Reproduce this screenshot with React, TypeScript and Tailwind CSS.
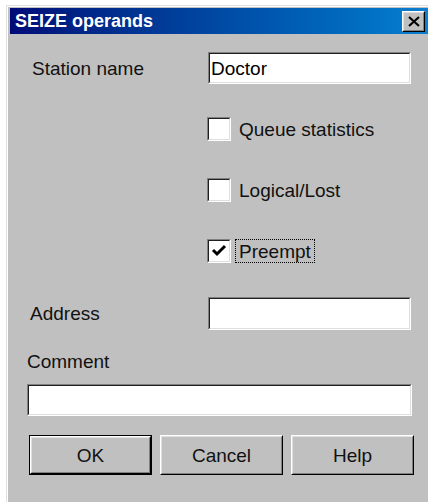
import type { ReactNode } from "react"

const font = "font-['Liberation_Sans',Arial,sans-serif]"

// Classic sunken 3D edit field
function Field({ value = "", className = "" }: { value?: string; className?: string }) {
  return (
    <div className={`border border-t-[#808080] border-l-[#808080] border-b-white border-r-white ${className}`}>
      <div className="h-full border border-t-[#202020] border-l-[#202020] border-b-[#dfdfdf] border-r-[#dfdfdf] bg-white flex items-center px-[1px]">
        <span className="text-[19px] leading-none text-black">{value}</span>
      </div>
    </div>
  )
}

function CheckBox({ checked, children, focused }: { checked?: boolean; children: ReactNode; focused?: boolean }) {
  return (
    <div className="flex items-center h-[24px]">
      <div className="w-[24px] h-[24px] border border-t-[#808080] border-l-[#808080] border-b-white border-r-white">
        <div className="w-full h-full border border-t-[#202020] border-l-[#202020] border-b-[#dfdfdf] border-r-[#dfdfdf] bg-white flex items-center justify-center">
          {checked && (
            <svg width="16" height="14" viewBox="0 0 16 14">
              <polyline points="2,6 6,10 14,2" fill="none" stroke="black" strokeWidth="3" />
            </svg>
          )}
        </div>
      </div>
      {focused ? (
        <span className="ml-[4px] border border-dotted border-black px-[3px] h-[24px] flex items-center text-[19px] leading-none">
          {children}
        </span>
      ) : (
        <span className="ml-[8px] text-[19px] leading-none">{children}</span>
      )}
    </div>
  )
}

function Button({ label, primary }: { label: string; primary?: boolean }) {
  const face = (
    <div className="h-full border border-t-white border-l-white border-b-black border-r-black">
      <div className="h-full border border-t-[#dfdfdf] border-l-[#dfdfdf] border-b-[#808080] border-r-[#808080] flex items-center justify-center text-[19px] leading-none">
        {label}
      </div>
    </div>
  )
  return primary ? (
    <div className="w-[123px] h-[40px] border border-black">{face}</div>
  ) : (
    <div className="w-[123px] h-[40px]">{face}</div>
  )
}

export default function App() {
  return (
    <div className={`min-h-[502px] bg-white overflow-hidden text-[#111] ${font}`}>
      <div className="ml-[6px] mt-[5px] w-[440px] border-l border-t border-[#dfdfdf]">
        <div className="border-l border-t border-white bg-[#c0c0c0] pt-[1px] pl-[2px] min-h-[497px]">
          {/* title bar */}
          <div className="h-[26px] flex items-center justify-between bg-gradient-to-r from-[#000a78] to-[#1284d4] pl-[5px] pr-[21px]">
            <span className="text-white font-bold text-[18px] leading-none">SEIZE operands</span>
            <div className="w-[23px] h-[21px] border border-t-white border-l-white border-b-black border-r-black bg-[#c0c0c0]">
              <div className="w-full h-full border border-b-[#808080] border-r-[#808080] border-t-[#dfdfdf] border-l-[#dfdfdf] flex items-center justify-center">
                <svg width="12" height="11" viewBox="0 0 12 11">
                  <path d="M1 1 L11 10 M11 1 L1 10" stroke="black" strokeWidth="2.2" />
                </svg>
              </div>
            </div>
          </div>

          {/* dialog body */}
          <div className="flex flex-col pt-[18px]">
            <div className="flex items-center h-[32px]">
              <span className="w-[198px] pl-[22px] text-[19px] leading-none">Station name</span>
              <Field value="Doctor" className="w-[203px] h-[32px]" />
            </div>

            <div className="flex flex-col gap-[37px] mt-[33px] pl-[197px]">
              <CheckBox>Queue statistics</CheckBox>
              <CheckBox>Logical/Lost</CheckBox>
              <CheckBox checked focused>
                Preempt
              </CheckBox>
            </div>

            <div className="flex items-center h-[33px] mt-[34px]">
              <span className="w-[198px] pl-[20px] text-[19px] leading-none">Address</span>
              <Field className="w-[203px] h-[33px]" />
            </div>

            <div className="mt-[20px] pl-[17px] h-[22px] flex items-center text-[19px] leading-none">Comment</div>
            <Field className="ml-[17px] mt-[12px] w-[385px] h-[32px]" />

            <div className="flex gap-[8px] ml-[19px] mt-[19px]">
              <Button label="OK" primary />
              <Button label="Cancel" />
              <Button label="Help" />
            </div>
          </div>
        </div>
      </div>
    </div>
  )
}
